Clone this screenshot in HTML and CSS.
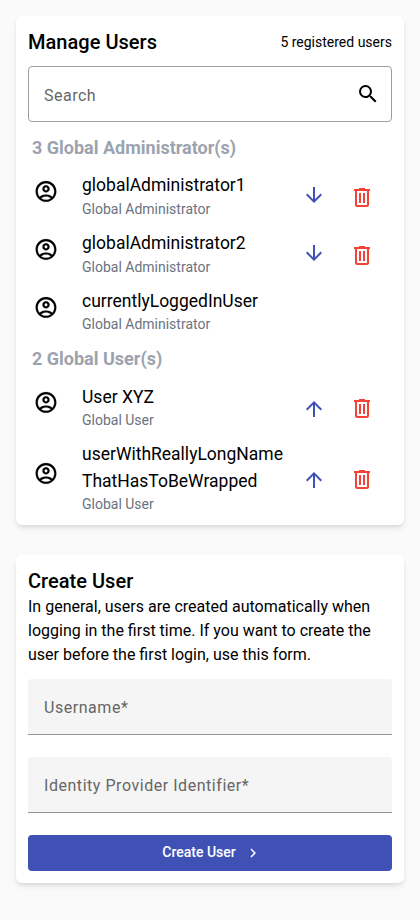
FILE: index.html
```html
<!DOCTYPE html>
<html lang="en">
<head>
<meta charset="utf-8">
<title>Manage Users</title>
<link rel="stylesheet" href="styles.css">
</head>
<body>
<svg class="defs" width="0" height="0">
  <symbol id="account" viewBox="0.4 0 23.2 23.2"><path d="M12 2C6.480 2 2 6.480 2 12s4.480 10 10 10 10-4.480 10-10S17.520 2 12 2zM7.350 18.500C8.660 17.560 10.260 17 12 17s3.340.56 4.650 1.500C15.340 19.440 13.740 20 12 20s-3.340-.56-4.650-1.500zm10.790-1.380C16.450 15.800 14.320 15 12 15s-4.450.8-6.140 2.120C4.700 15.730 4 13.950 4 12c0-4.420 3.580-8 8-8s8 3.580 8 8c0 1.950-.7 3.730-1.860 5.120zM12 6c-1.930 0-3.500 1.570-3.500 3.500S10.070 13 12 13s3.500-1.570 3.500-3.500S13.930 6 12 6zm0 5c-.83 0-1.500-.67-1.500-1.500S11.170 8 12 8s1.500.67 1.500 1.500S12.830 11 12 11z"/></symbol>
  <symbol id="down" viewBox="0 0 24 24"><path d="M20 12l-1.410-1.410L13 16.170V4h-2v12.170l-5.580-5.590L4 12l8 8 8-8z"/></symbol>
  <symbol id="up" viewBox="0 0 24 24"><path d="M4 12l1.410 1.410L11 7.830V20h2V7.830l5.580 5.590L20 12l-8-8-8 8z"/></symbol>
  <symbol id="trash" viewBox="0 0 24 24"><path d="M15 4V3H9v1H4v2h1v14c0 1.100.9 2 2 2h10c1.100 0 2-.9 2-2V6h1V4h-5zm2 16H7V6h10v14zM9 8h2v10H9V8zm4 0h2v10h-2V8z"/></symbol>
</svg>
<main class="page">
  <section class="card users">
    <header class="card-head"><h2>Manage Users</h2><span class="count">5 registered users</span></header>
    <div class="search"><span>Search</span><svg viewBox="0 0 24 24"><path d="M15.500 14h-.79l-.28-.27A6.471 6.471 0 0 0 16 9.500 6.500 6.500 0 1 0 9.500 16c1.610 0 3.090-.59 4.230-1.570l.27.28v.79l5 4.990L20.490 19l-4.990-5zm-6 0C7.010 14 5 11.990 5 9.500S7.010 5 9.500 5 14 7.010 14 9.500 11.990 14 9.500 14z"/></svg></div>
    <h3>3 Global Administrator(s)</h3>
    <div class="user"><svg class="avatar"><use href="#account"/></svg><div class="info"><div class="name">globalAdministrator1</div><div class="role">Global Administrator</div></div><svg class="move"><use href="#down"/></svg><svg class="delete"><use href="#trash"/></svg></div>
    <div class="user"><svg class="avatar"><use href="#account"/></svg><div class="info"><div class="name">globalAdministrator2</div><div class="role">Global Administrator</div></div><svg class="move"><use href="#down"/></svg><svg class="delete"><use href="#trash"/></svg></div>
    <div class="user last"><svg class="avatar"><use href="#account"/></svg><div class="info"><div class="name">currentlyLoggedInUser</div><div class="role">Global Administrator</div></div></div>
    <h3>2 Global User(s)</h3>
    <div class="user first"><svg class="avatar"><use href="#account"/></svg><div class="info"><div class="name">User XYZ</div><div class="role">Global User</div></div><svg class="move up"><use href="#up"/></svg><svg class="delete"><use href="#trash"/></svg></div>
    <div class="user long"><svg class="avatar"><use href="#account"/></svg><div class="info"><div class="name">userWithReallyLongName<wbr>ThatHasToBeWrapped</div><div class="role">Global User</div></div><svg class="move up"><use href="#up"/></svg><svg class="delete"><use href="#trash"/></svg></div>
  </section>
  <section class="card create">
    <h2>Create User</h2>
    <p>In general, users are created automatically when logging in the first time. If you want to create the user before the first login, use this form.</p>
    <div class="field">Username*</div>
    <div class="field">Identity Provider Identifier*</div>
    <button class="submit" type="button">Create User<svg viewBox="0 0 24 24"><path d="M10 6L8.590 7.410 13.170 12l-4.580 4.590L10 18l6-6z"/></svg></button>
  </section>
</main>
</body>
</html>
```
FILE: styles.css
```css
* { box-sizing: border-box; }
body { margin: 0; background: #fafafa; color: #000; font-family: Roboto, sans-serif; }
.defs { position: absolute; }
svg { display: block; flex: none; fill: currentColor; }
h2, h3, p { margin: 0; }
.page { padding: 16px; display: flex; flex-direction: column; gap: 30px; }
.card { background: #fff; border-radius: 6px; padding: 12px; box-shadow: 0 4px 6px -1px rgba(0,0,0,.1), 0 2px 4px -2px rgba(0,0,0,.1); }
.users { height: 509px; }
.create { height: 328px; }
.card-head { display: flex; justify-content: space-between; align-items: center; height: 28px; }
h2 { font-size: 20px; line-height: 28px; font-weight: 500; letter-spacing: .03px; }
.count { font-size: 14px; line-height: 20px; }
.search { height: 56px; margin-top: 10px; padding: 0 11px 0 15px; border: 1px solid #9e9e9e; border-radius: 4px; display: flex; align-items: center; justify-content: space-between; color: #666; font-size: 16px; letter-spacing: .5px; }
.search span { padding-top: 2px; }
.search svg { width: 24px; height: 24px; color: #000; }
h3 { height: 32px; margin-top: 10px; padding-left: 4px; color: #9ca3af; font-size: 18px; line-height: 32px; font-weight: 700; }
.user { height: 58px; display: flex; align-items: flex-start; }
.avatar { width: 24px; height: 24px; margin: 15px 24px 0 6px; stroke: currentColor; stroke-width: .15px; }
.info { width: 208px; padding-top: 8px; }
.name { font-size: 17.5px; line-height: 27px; }
.role { color: #6b7280; font-size: 14px; line-height: 20px; }
.move { width: 24px; height: 24px; margin: 19px 24px 0 12px; color: #3f51b5; }
.up { margin-top: 22px; }
.delete { width: 24px; height: 24px; margin-top: 21px; color: #f44336; }
.last { height: 53px; }
.last .role, .first .role, .long .role { margin-top: -1px; }
.first .info { padding-top: 9px; }
.long { height: 85px; }
.long .info { padding-top: 8px; }
.long .avatar { margin-top: 28px; }
.long .move { margin-top: 35px; }
.long .delete { margin-top: 34px; }
.create p { font-size: 16px; line-height: 24px; }
.field { height: 56px; margin-top: 12px; padding: 1px 16px 0; background: #f5f5f5; border-bottom: 1px solid #949494; border-radius: 4px 4px 0 0; line-height: 56px; color: #666; font-size: 16px; letter-spacing: .54px; }
.field + .field { margin-top: 22px; }
.submit { width: 100%; height: 36px; margin-top: 22px; padding: 0 0 1px 1px; border: 0; border-radius: 4px; background: #3f51b5; color: #fff; display: flex; align-items: center; justify-content: center; gap: 8px; font: 500 14px/35px Roboto, sans-serif; }
.submit svg { width: 18px; height: 18px; margin: 1px -3px 0 0; }
```
